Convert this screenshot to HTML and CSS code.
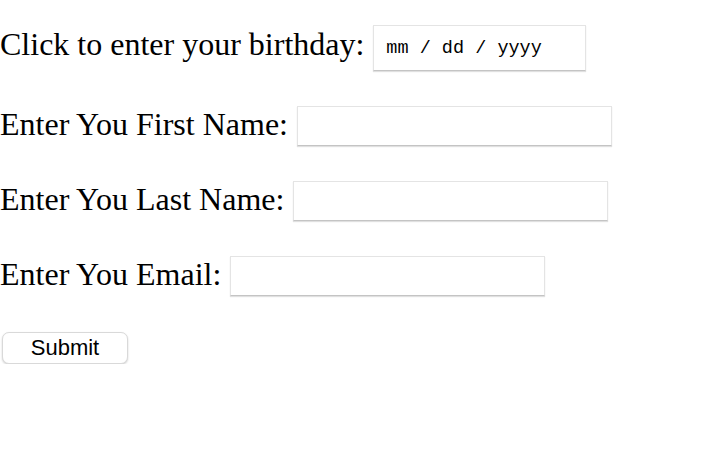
FILE: index.html
```html
<!DOCTYPE html>
<html>
<head>
<meta charset="utf-8">
<link rel="stylesheet" href="styles.css">
</head>
<body>
<form class="form">
  <div class="row">
    <label class="label label-date" for="bday">Click to enter your birthday:</label>
    <input class="field date-field" id="bday" type="text" placeholder="mm / dd / yyyy">
  </div>
  <div class="row">
    <label class="label" for="fname">Enter You First Name:</label>
    <input class="field" id="fname" type="text">
  </div>
  <div class="row">
    <label class="label" for="lname">Enter You Last Name:</label>
    <input class="field" id="lname" type="text">
  </div>
  <div class="row">
    <label class="label" for="email">Enter You Email:</label>
    <input class="field" id="email" type="email">
  </div>
  <div class="row">
    <button class="submit" type="submit">Submit</button>
  </div>
</form>
</body>
</html>
```
FILE: styles.css
```css
html, body {
  margin: 0;
  padding: 0;
  background: #fff;
}
body {
  font-family: "Liberation Serif", "Times New Roman", serif;
  color: #000;
}
.form {
  display: flex;
  flex-direction: column;
  gap: 35px;
  padding-top: 25px;
}
.row {
  display: flex;
  align-items: center;
  gap: 9px;
}
.label {
  font-size: 32px;
  line-height: 36px;
  margin-bottom: 4px;
}
.label-date {
  margin-bottom: 8px;
}
.field {
  box-sizing: border-box;
  width: 315px;
  height: 40px;
  margin: 0;
  padding: 0 12px;
  border: 1px solid #e4e4e4;
  border-bottom-color: #c4c4c4;
  box-shadow: 0 1px 1px rgba(0, 0, 0, 0.12);
  background: #fff;
  font-family: "Liberation Mono", monospace;
  font-size: 18.5px;
  outline: none;
}
.date-field {
  width: 213px;
  height: 46px;
}
.date-field::placeholder {
  color: #000;
  opacity: 1;
}
.submit {
  box-sizing: border-box;
  margin: 1px 0 0 2px;
  width: 126px;
  height: 32px;
  padding: 0;
  background: #fff;
  border: 1px solid #d9d9d9;
  border-radius: 7px;
  box-shadow: 0 1px 2px rgba(0, 0, 0, 0.18);
  font-family: "Liberation Sans", Arial, sans-serif;
  font-size: 22px;
  color: #000;
}
```
